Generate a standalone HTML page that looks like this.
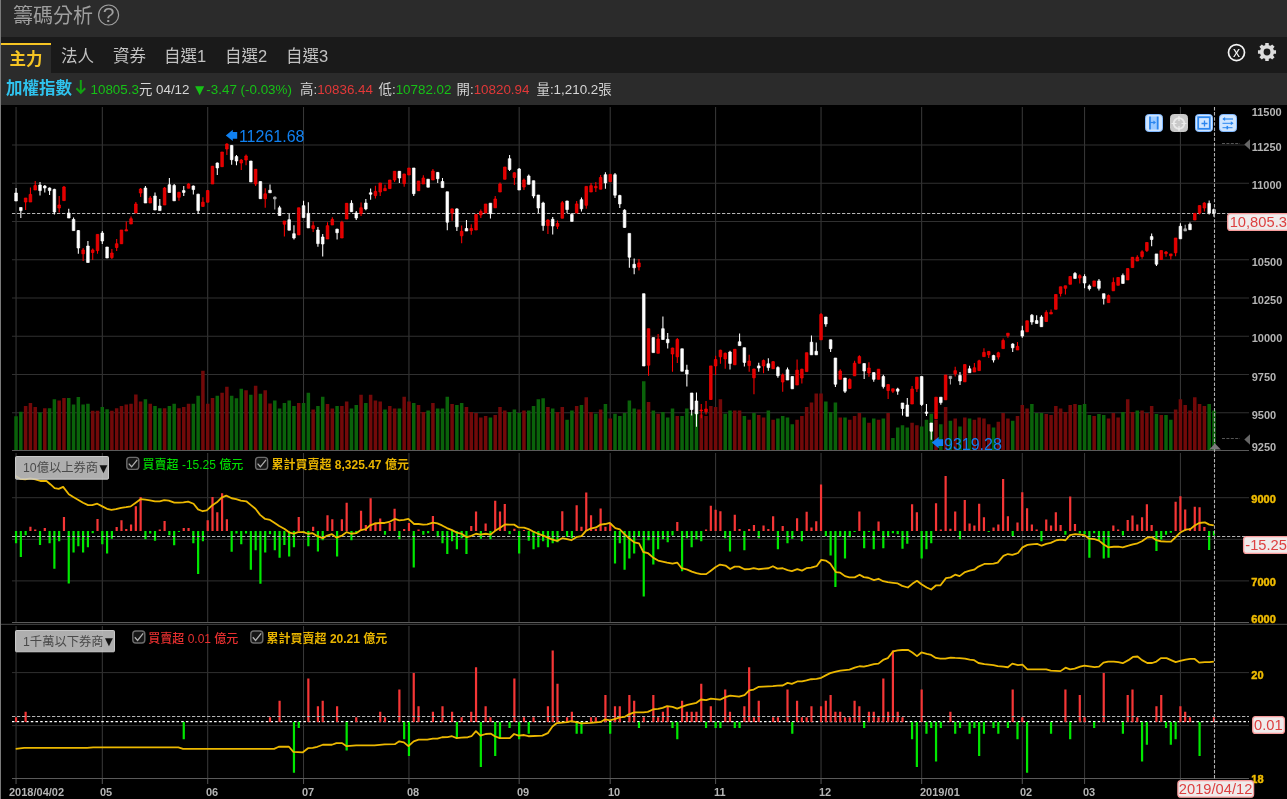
<!DOCTYPE html>
<html lang="zh-Hant">
<head>
<meta charset="utf-8">
<title>籌碼分析</title>
<style>
html,body{margin:0;padding:0;background:#000;}
body{width:1287px;height:799px;overflow:hidden;position:relative;font-family:"Liberation Sans","Noto Sans CJK TC",sans-serif;}
.title{position:absolute;left:0;top:0;width:1287px;height:37px;background:#2b2b2b;}
.title .t{position:absolute;left:13px;top:0;line-height:32px;font-size:20px;color:#9f9f9f;white-space:nowrap;}
.tabs{position:absolute;left:0;top:37px;width:1287px;height:36px;background:#1a1a1a;}
.tab{position:absolute;top:6px;height:30px;line-height:27px;font-size:16.5px;color:#c2c2c2;white-space:nowrap;}
.tab.on{left:1px;width:50px;background:#2b2b2b;border-top:2px solid #f6c523;height:28px;color:#f6c523;font-weight:bold;text-align:center;line-height:28px;}
.info{position:absolute;left:0;top:73px;width:1287px;height:32px;background:#2b2b2b;font-size:13.4px;color:#d6d6d6;white-space:nowrap;}
.info span{position:absolute;top:0;line-height:33px;}
.info span.nm{font-size:16.5px;font-weight:bold;color:#2fc3ee;line-height:30px;}
.info span.tri{position:static;font-size:15.5px;line-height:20px;vertical-align:-0.5px;margin-right:-1px;}
.g{color:#16c116;}
.r{color:#e23838;}
.lb{position:absolute;left:0;top:0;width:1px;height:799px;background:#7a7a7a;}
svg{position:absolute;left:0;top:0;}
svg text{font-family:"Liberation Sans","Noto Sans CJK TC",sans-serif;}
</style>
</head>
<body>
<svg width="1287" height="799" viewBox="0 0 1287 799" style="will-change:transform">
<rect x="0" y="105" width="1287" height="694" fill="#000"/>
<path d="M16.05 107V450M16.05 453V622M16.05 626V778M102.3 107V450M102.3 453V622M102.3 626V778M207.71 107V450M207.71 453V622M207.71 626V778M303.55 107V450M303.55 453V622M303.55 626V778M408.96 107V450M408.96 453V622M408.96 626V778M519.17 107V450M519.17 453V622M519.17 626V778M610.21 107V450M610.21 453V622M610.21 626V778M715.62 107V450M715.62 453V622M715.62 626V778M821.04 107V450M821.04 453V622M821.04 626V778M921.66 107V450M921.66 453V622M921.66 626V778M1022.29 107V450M1022.29 453V622M1022.29 626V778M1084.58 107V450M1084.58 453V622M1084.58 626V778M1180.41 107V450M1180.41 453V622M1180.41 626V778" stroke="#3a3a3a" stroke-width="1" fill="none"/>
<path d="M16.05 779V784M102.3 779V784M207.71 779V784M303.55 779V784M408.96 779V784M519.17 779V784M610.21 779V784M715.62 779V784M821.04 779V784M921.66 779V784M1022.29 779V784M1084.58 779V784M1180.41 779V784" stroke="#555" stroke-width="1" fill="none"/>
<path d="M12 145H1249M12 183.25H1249M12 221.5H1249M12 259.75H1249M12 298H1249M12 336.25H1249M12 374.5H1249M12 412.75H1249M12 497.7H1249M12 539.3H1249M12 580.9H1249M12 672.6H1249M12 725.6H1249" stroke="#303030" stroke-width="1" fill="none"/>
<path d="M12 450.5H1249" stroke="#5a5a5a" stroke-width="1" fill="none"/>
<path d="M12 622.5H1249" stroke="#5a5a5a" stroke-width="1" fill="none"/>
<path d="M1 624.4H1287" stroke="#3a3a3a" stroke-width="1.2" fill="none"/>
<path d="M12 778.5H1249" stroke="#5a5a5a" stroke-width="1" fill="none"/>
<path d="M23.88 450v-44.1h3.5V450zM28.67 450v-47.11h3.5V450zM33.47 450v-42.93h3.5V450zM43.05 450v-41.76h3.5V450zM57.42 450v-49.62h3.5V450zM62.22 450v-52.12h3.5V450zM90.97 450v-39.26h3.5V450zM95.76 450v-39.26h3.5V450zM110.13 450v-39.26h3.5V450zM114.92 450v-41.76h3.5V450zM119.72 450v-44.1h3.5V450zM124.51 450v-45.44h3.5V450zM129.3 450v-46.27h3.5V450zM134.09 450v-55.46h3.5V450zM138.88 450v-48.45h3.5V450zM148.46 450v-46.27h3.5V450zM162.84 450v-41.76h3.5V450zM177.21 450v-41.76h3.5V450zM182.01 450v-42.93h3.5V450zM186.8 450v-46.27h3.5V450zM201.17 450v-79.18h3.5V450zM205.96 450v-46.27h3.5V450zM210.76 450v-52.12h3.5V450zM220.34 450v-57.17h3.5V450zM225.13 450v-63.23h3.5V450zM244.3 450v-59.8h3.5V450zM253.88 450v-64.24h3.5V450zM263.46 450v-59.8h3.5V450zM268.25 450v-46.46h3.5V450zM297 450v-47.07h3.5V450zM311.38 450v-40.4h3.5V450zM325.75 450v-46.06h3.5V450zM330.55 450v-41.41h3.5V450zM340.13 450v-44.04h3.5V450zM344.92 450v-48.48h3.5V450zM359.3 450v-55.15h3.5V450zM368.88 450v-55.15h3.5V450zM373.67 450v-49.49h3.5V450zM378.46 450v-48.48h3.5V450zM388.04 450v-44.04h3.5V450zM392.84 450v-41.41h3.5V450zM402.42 450v-53.13h3.5V450zM407.21 450v-48.48h3.5V450zM416.79 450v-45.05h3.5V450zM421.59 450v-37.98h3.5V450zM431.17 450v-47.07h3.5V450zM450.34 450v-46.06h3.5V450zM464.71 450v-43.03h3.5V450zM469.5 450v-37.98h3.5V450zM474.29 450v-36.97h3.5V450zM479.09 450v-32.53h3.5V450zM483.88 450v-33.94h3.5V450zM493.46 450v-34.95h3.5V450zM498.25 450v-43.03h3.5V450zM503.04 450v-39.39h3.5V450zM522.21 450v-39.39h3.5V450zM546.17 450v-43.03h3.5V450zM555.75 450v-37.98h3.5V450zM560.54 450v-43.03h3.5V450zM574.92 450v-44.04h3.5V450zM584.5 450v-52.73h3.5V450zM589.29 450v-37.98h3.5V450zM598.88 450v-40.4h3.5V450zM608.46 450v-31.52h3.5V450zM637.21 450v-40.4h3.5V450zM646.79 450v-48.08h3.5V450zM656.37 450v-36.36h3.5V450zM675.54 450v-33.94h3.5V450zM699.5 450v-35.56h3.5V450zM704.29 450v-33.94h3.5V450zM709.08 450v-44.04h3.5V450zM713.87 450v-43.03h3.5V450zM718.67 450v-50.71h3.5V450zM733.04 450v-39.39h3.5V450zM737.83 450v-39.39h3.5V450zM747.41 450v-30.3h3.5V450zM757 450v-34.95h3.5V450zM761.79 450v-32.53h3.5V450zM771.37 450v-30.3h3.5V450zM795.33 450v-30.3h3.5V450zM800.12 450v-33.94h3.5V450zM804.91 450v-43.03h3.5V450zM809.71 450v-47.47h3.5V450zM814.5 450v-56.57h3.5V450zM819.29 450v-56.57h3.5V450zM838.46 450v-32.53h3.5V450zM848.04 450v-30.3h3.5V450zM852.83 450v-33.94h3.5V450zM857.62 450v-36.97h3.5V450zM867.2 450v-27.27h3.5V450zM876.79 450v-30.3h3.5V450zM886.37 450v-36.97h3.5V450zM910.33 450v-27.27h3.5V450zM915.12 450v-24.85h3.5V450zM934.29 450v-30.3h3.5V450zM943.87 450v-43.03h3.5V450zM953.45 450v-31.52h3.5V450zM963.04 450v-32.53h3.5V450zM972.62 450v-30.3h3.5V450zM977.41 450v-32.53h3.5V450zM982.2 450v-31.52h3.5V450zM986.99 450v-25.86h3.5V450zM996.58 450v-28.28h3.5V450zM1001.37 450v-36.97h3.5V450zM1006.16 450v-31.52h3.5V450zM1015.74 450v-33.94h3.5V450zM1020.54 450v-45.05h3.5V450zM1025.33 450v-41.41h3.5V450zM1044.49 450v-35.96h3.5V450zM1049.29 450v-34.95h3.5V450zM1054.08 450v-44.04h3.5V450zM1058.87 450v-41.41h3.5V450zM1063.66 450v-37.98h3.5V450zM1068.45 450v-45.05h3.5V450zM1073.24 450v-46.06h3.5V450zM1092.41 450v-33.94h3.5V450zM1106.78 450v-31.52h3.5V450zM1111.58 450v-36.97h3.5V450zM1116.37 450v-32.53h3.5V450zM1125.95 450v-50.71h3.5V450zM1130.74 450v-37.98h3.5V450zM1140.33 450v-39.39h3.5V450zM1145.12 450v-36.97h3.5V450zM1149.91 450v-44.04h3.5V450zM1159.49 450v-34.95h3.5V450zM1173.87 450v-40.4h3.5V450zM1178.66 450v-50.71h3.5V450zM1183.45 450v-45.05h3.5V450zM1188.24 450v-39.39h3.5V450zM1193.03 450v-52.73h3.5V450zM1197.83 450v-46.06h3.5V450zM1202.62 450v-44.04h3.5V450z" fill="#720909"/>
<path d="M14.3 450v-33.75h3.5V450zM19.09 450v-38.26h3.5V450zM38.26 450v-37.42h3.5V450zM47.84 450v-41.76h3.5V450zM52.63 450v-50.79h3.5V450zM67.01 450v-52.12h3.5V450zM71.8 450v-45.44h3.5V450zM76.59 450v-52.96h3.5V450zM81.38 450v-45.44h3.5V450zM86.17 450v-46.27h3.5V450zM100.55 450v-42.93h3.5V450zM105.34 450v-40.76h3.5V450zM143.67 450v-50.79h3.5V450zM153.26 450v-44.1h3.5V450zM158.05 450v-41.76h3.5V450zM167.63 450v-44.1h3.5V450zM172.42 450v-46.27h3.5V450zM191.59 450v-46.27h3.5V450zM196.38 450v-54.29h3.5V450zM215.55 450v-54.14h3.5V450zM229.92 450v-54.14h3.5V450zM234.71 450v-51.72h3.5V450zM239.51 450v-61.21h3.5V450zM249.09 450v-55.15h3.5V450zM258.67 450v-56.16h3.5V450zM273.05 450v-49.49h3.5V450zM277.84 450v-41.41h3.5V450zM282.63 450v-47.07h3.5V450zM287.42 450v-49.49h3.5V450zM292.21 450v-44.04h3.5V450zM301.8 450v-47.07h3.5V450zM306.59 450v-57.17h3.5V450zM316.17 450v-44.04h3.5V450zM320.96 450v-53.13h3.5V450zM335.34 450v-44.04h3.5V450zM349.71 450v-41.41h3.5V450zM354.5 450v-45.05h3.5V450zM364.09 450v-47.07h3.5V450zM383.25 450v-40.4h3.5V450zM397.63 450v-41.41h3.5V450zM412 450v-47.07h3.5V450zM426.38 450v-39.39h3.5V450zM435.96 450v-41.41h3.5V450zM440.75 450v-41.41h3.5V450zM445.54 450v-53.13h3.5V450zM455.13 450v-45.05h3.5V450zM459.92 450v-47.07h3.5V450zM488.67 450v-32.53h3.5V450zM507.83 450v-37.98h3.5V450zM512.63 450v-40.4h3.5V450zM517.42 450v-36.97h3.5V450zM527 450v-39.39h3.5V450zM531.79 450v-44.04h3.5V450zM536.58 450v-50.71h3.5V450zM541.38 450v-51.72h3.5V450zM550.96 450v-41.41h3.5V450zM565.33 450v-30.3h3.5V450zM570.13 450v-39.39h3.5V450zM579.71 450v-45.05h3.5V450zM594.08 450v-36.36h3.5V450zM603.67 450v-46.06h3.5V450zM613.25 450v-36.36h3.5V450zM618.04 450v-33.94h3.5V450zM622.83 450v-36.97h3.5V450zM627.62 450v-49.49h3.5V450zM632.42 450v-41.41h3.5V450zM642 450v-68.69h3.5V450zM651.58 450v-39.39h3.5V450zM661.17 450v-37.98h3.5V450zM665.96 450v-32.53h3.5V450zM670.75 450v-41.41h3.5V450zM680.33 450v-33.94h3.5V450zM685.12 450v-41.41h3.5V450zM689.92 450v-36.57h3.5V450zM694.71 450v-38.38h3.5V450zM723.46 450v-36.36h3.5V450zM728.25 450v-39.39h3.5V450zM742.62 450v-33.94h3.5V450zM752.21 450v-36.97h3.5V450zM766.58 450v-39.39h3.5V450zM776.16 450v-31.52h3.5V450zM780.96 450v-33.94h3.5V450zM785.75 450v-32.53h3.5V450zM790.54 450v-25.86h3.5V450zM824.08 450v-48.48h3.5V450zM828.87 450v-37.98h3.5V450zM833.66 450v-47.47h3.5V450zM843.25 450v-32.53h3.5V450zM862.41 450v-32.53h3.5V450zM872 450v-31.52h3.5V450zM881.58 450v-31.52h3.5V450zM891.16 450v-12.12h3.5V450zM895.95 450v-22.42h3.5V450zM900.75 450v-24.85h3.5V450zM905.54 450v-22.42h3.5V450zM919.91 450v-23.43h3.5V450zM924.7 450v-30.3h3.5V450zM929.5 450v-36.36h3.5V450zM939.08 450v-25.86h3.5V450zM948.66 450v-29.29h3.5V450zM958.25 450v-23.43h3.5V450zM967.83 450v-31.52h3.5V450zM991.79 450v-22.42h3.5V450zM1010.95 450v-29.29h3.5V450zM1030.12 450v-46.06h3.5V450zM1034.91 450v-36.97h3.5V450zM1039.7 450v-36.97h3.5V450zM1078.04 450v-45.05h3.5V450zM1082.83 450v-46.06h3.5V450zM1087.62 450v-34.95h3.5V450zM1097.2 450v-35.96h3.5V450zM1101.99 450v-34.95h3.5V450zM1121.16 450v-37.98h3.5V450zM1135.53 450v-39.39h3.5V450zM1154.7 450v-35.96h3.5V450zM1164.28 450v-34.95h3.5V450zM1169.08 450v-30.3h3.5V450zM1207.41 450v-46.06h3.5V450zM1212.2 450v-39.39h3.5V450z" fill="#0a620a"/>
<path d="M12 213.5H1249" stroke="#b4b4b4" stroke-width="1" stroke-dasharray="3.3 1.7" fill="none"/>
<path d="M16.05 188V201M20.84 207.5V218M40.01 182V195.6M44.8 185V192.5M49.59 187.5V195M54.38 188.75V214.4M68.76 208.75V218M73.55 217.5V230.6M78.34 230V253.75M87.92 241V262.5M102.3 231V244M107.09 247V258M145.42 186V203M155.01 192.5V210M159.8 199V210.6M169.38 178V192.5M174.17 184V200.8M183.76 186V196M193.34 185.4V194.5M198.13 193.8V214M217.3 162.5V175M231.67 145V164.8M236.46 155V165.3M250.84 161V181.9M260.42 181.6V198.7M270 184.4V192.8M279.59 205.7V215.5M289.17 213.8V230.2M293.96 225.3V239.4M303.55 200.8V217.6M308.34 202.2V227.9M317.92 227V246.7M322.71 234V256.5M337.09 228.8V239.4M351.46 200.2V211.7M356.25 211V220M365.84 199V210.3M370.63 188.6V199.8M399.38 171V183M413.75 168V196M428.13 179.2V187.2M437.71 172V183M442.5 178V187.6M447.29 191.8V230.2M456.88 208.2V231M466.46 220V231M490.42 203.2V218.6M509.58 155V171M519.17 168V190M528.75 174.4V184.3M533.54 180.7V198.3M538.33 195V213M543.13 201.8V230.8M552.71 217V234.4M567.08 200.8V213M571.88 213V221.4M581.46 197.6V211.6M605.42 172.3V188.7M615 173V198M619.79 194.8V208M624.58 209.2V227.8M629.37 233.4V267.8M634.17 258.4V274.3M643.75 293.7V366M653.33 337.6V352.6M662.92 316.5V339.5M667.71 333V348.4M682.08 348.8V371.2M686.87 364.8V386.6M691.67 393V415.6M696.46 392.5V426.8M730 350.7V369.4M739.58 333.4V345.6M744.37 347.7V366.6M758.75 362.8V371.8M768.33 358.2V370.8M777.91 366.2V377.8M787.5 367.4V380M792.29 376.5V388.8M811.46 335.6V354.8M816.25 342.6V354.8M825.83 317V326.7M830.62 339.8V352M835.41 358V387M845 378V393M864.16 363.6V379M873.75 372.6V381.8M883.33 374.8V388.4M897.7 387.7V394.7M902.5 403V415.6M907.29 398V416.3M921.66 376.5V405.9M926.45 404V416M931.25 423V439.8M940.83 397.2V404.8M960 372V385M969.58 365.7V372.7M993.54 354.8V362.6M1012.7 343.3V352M1022.29 325.7V337.7M1031.87 314V324.8M1036.66 315.2V323.4M1041.45 315.2V326.7M1074.99 272V278.4M1084.58 274.2V288.3M1089.37 284.6V290.5M1098.95 279V290.5M1103.74 293.7V304.5M1122.91 273.5V283.4M1151.66 233.6V246.2M1156.45 253.9V266M1180.41 223.3V238.8M1189.99 222.6V229.7M1209.16 200.4V214.5M1213.95 208.5V216.7" stroke="#ffffff" stroke-width="1.05" fill="none"/>
<path d="M14.75 193h2.6v8h-2.6zM19.54 207.5h2.6v3.1h-2.6zM38.71 185h2.6v5.6h-2.6zM43.5 186h2.6v2h-2.6zM48.29 188h2.6v2.6h-2.6zM53.08 189.4h2.6v22.6h-2.6zM67.46 213h2.6v5h-2.6zM72.25 219.4h2.6v11.2h-2.6zM77.04 230.6h2.6v17.4h-2.6zM86.62 246h2.6v16.5h-2.6zM101 233h2.6v8h-2.6zM105.79 247h2.6v11h-2.6zM144.12 188h2.6v15h-2.6zM153.71 196h2.6v14h-2.6zM158.5 206h2.6v4.6h-2.6zM168.08 184.75h2.6v7.75h-2.6zM172.87 185.4h2.6v15.4h-2.6zM182.46 190.6h2.6v1.8h-2.6zM192.04 186h2.6v3.6h-2.6zM196.83 194.2h2.6v16.4h-2.6zM216 163h2.6v4.9h-2.6zM230.37 145.4h2.6v14.3h-2.6zM235.16 156.6h2.6v4.4h-2.6zM249.54 161h2.6v20.9h-2.6zM259.12 181.6h2.6v17.1h-2.6zM268.7 190.3h2.6v2.5h-2.6zM278.29 207.8h2.6v7.7h-2.6zM287.87 219.7h2.6v10.5h-2.6zM292.66 233.7h2.6v4.3h-2.6zM302.25 205.7h2.6v11.9h-2.6zM307.04 213.4h2.6v14.5h-2.6zM316.62 230h2.6v13.6h-2.6zM321.41 237h2.6v7h-2.6zM335.79 229.2h2.6v3.5h-2.6zM350.16 203.3h2.6v8.4h-2.6zM354.95 213h2.6v5h-2.6zM364.54 203h2.6v5.9h-2.6zM369.33 192.8h2.6v1.4h-2.6zM398.08 171.3h2.6v6.7h-2.6zM412.45 168h2.6v25.7h-2.6zM426.83 179.2h2.6v8h-2.6zM436.41 172.4h2.6v6.3h-2.6zM441.2 181.5h2.6v6.1h-2.6zM445.99 191.8h2.6v30.4h-2.6zM455.58 208.9h2.6v17.9h-2.6zM465.16 228.5h2.6v2.5h-2.6zM489.12 203.2h2.6v10.5h-2.6zM508.28 158.7h2.6v10.8h-2.6zM517.87 169h2.6v21h-2.6zM527.45 176h2.6v8.3h-2.6zM532.24 180.7h2.6v15.3h-2.6zM537.03 195h2.6v13h-2.6zM541.83 203h2.6v22.6h-2.6zM551.41 219.3h2.6v6.7h-2.6zM565.78 201h2.6v8.5h-2.6zM570.58 214.4h2.6v7h-2.6zM580.16 199.7h2.6v9.1h-2.6zM604.12 174.7h2.6v8.2h-2.6zM613.7 174.7h2.6v20.5h-2.6zM618.49 195.5h2.6v8.4h-2.6zM623.28 210.2h2.6v17.2h-2.6zM628.07 233.4h2.6v23.8h-2.6zM632.87 264.3h2.6v3.5h-2.6zM642.45 293.7h2.6v72.3h-2.6zM652.03 337.6h2.6v15h-2.6zM661.62 328.7h2.6v10.8h-2.6zM666.41 339.3h2.6v3.5h-2.6zM680.78 348.8h2.6v22.4h-2.6zM685.57 370h2.6v4h-2.6zM690.37 393h2.6v16.5h-2.6zM695.16 401h2.6v12.8h-2.6zM728.7 352h2.6v11.4h-2.6zM738.28 341.8h2.6v3.8h-2.6zM743.07 347.7h2.6v14.7h-2.6zM757.45 365.9h2.6v2.1h-2.6zM767.03 363.8h2.6v3.8h-2.6zM776.61 367.6h2.6v8.1h-2.6zM786.2 369.8h2.6v10.2h-2.6zM790.99 376.5h2.6v12.3h-2.6zM810.16 342.2h2.6v12.6h-2.6zM814.95 351.3h2.6v3.5h-2.6zM824.53 317h2.6v7h-2.6zM829.32 339.8h2.6v8.9h-2.6zM834.11 358h2.6v26.2h-2.6zM843.7 378h2.6v13.2h-2.6zM862.86 363.6h2.6v7.4h-2.6zM872.45 372.6h2.6v6.7h-2.6zM882.03 376.5h2.6v10.1h-2.6zM896.4 389h2.6v2.2h-2.6zM901.2 403h2.6v5.5h-2.6zM905.99 405h2.6v11.3h-2.6zM920.36 376.5h2.6v28h-2.6zM925.15 412h2.6v1.3h-2.6zM929.95 423h2.6v8.2h-2.6zM939.53 397.2h2.6v5.4h-2.6zM958.7 375.5h2.6v5.5h-2.6zM968.28 368.8h2.6v3.9h-2.6zM992.24 355.6h2.6v4.4h-2.6zM1011.4 344h2.6v3.8h-2.6zM1020.99 330.7h2.6v5.3h-2.6zM1030.57 315.2h2.6v6.8h-2.6zM1035.36 320.6h2.6v2.8h-2.6zM1040.15 317h2.6v9.7h-2.6zM1073.69 273.5h2.6v4.9h-2.6zM1083.28 276.5h2.6v6.5h-2.6zM1088.07 286h2.6v2.7h-2.6zM1097.65 280.9h2.6v7.4h-2.6zM1102.44 293.7h2.6v4.9h-2.6zM1121.61 275.4h2.6v8h-2.6zM1150.36 236.6h2.6v2.9h-2.6zM1155.15 253.9h2.6v10.3h-2.6zM1179.11 226.3h2.6v12.5h-2.6zM1188.69 224.3h2.6v5.4h-2.6zM1207.86 203.4h2.6v9.6h-2.6zM1212.65 209.6h2.6v3.4h-2.6z" fill="#ffffff" stroke="#ffffff" stroke-width="0.7"/>
<path d="M274.8 196.6V209.6M950.41 376.2V384.4M1185.2 224.8V231" stroke="#aaaaaa" stroke-width="1.05" fill="none"/>
<path d="M273.5 197h2.6v2h-2.6zM949.11 376.2h2.6v2.3h-2.6zM1183.9 228.8h2.6v2.2h-2.6z" fill="#aaaaaa" stroke="#aaaaaa" stroke-width="0.7"/>
<path d="M25.63 198V210M30.42 187.5V202M35.22 181V190M59.17 196V212.5M63.97 186V200.6M83.13 248V261M92.72 248.5V260M97.51 234.4V253.75M111.88 249V259M116.67 239V251M121.47 230V243.75M126.26 221.5V231M131.05 216.5V224M135.84 202V213M140.63 188V197M150.21 196V203M164.59 187V205M178.96 191.7V200.8M188.55 183.3V188.2M202.92 197.3V206.4M207.71 190V202.2M212.51 166.2V184M222.09 152V166.7M226.88 143.3V155M241.26 159V170M246.05 154.5V165.3M255.63 169.3V186M265.21 188.2V207.8M284.38 221V236.5M298.75 207.8V234.9M313.13 221.5V232M327.5 222.2V239M332.3 217.3V225M341.88 220.8V238M346.67 203.3V219M361.05 202.6V215.9M375.42 185.7V198.4M380.21 183V196M385 184.8V190.7M389.79 180V188.6M394.59 171.3V182M404.17 173.8V186.7M408.96 168V175M418.54 181V190.7M423.34 175.2V184M432.92 169V180M452.09 208.6V220.8M461.67 225.4V243.2M471.25 224.3V234.8M476.04 214.5V230M480.84 209.5V218M485.63 204V213M495.21 196V207.8M500 182.6V192M504.79 167V179.3M514.38 172.3V185M523.96 178.6V190M547.92 219.3V234M557.5 220.4V229M562.29 201V218.2M576.67 201V213M586.25 186.4V208.8M591.04 182.9V192M595.83 182V192M600.63 175V189.2M610.21 174.4V181.7M638.96 259V270.6M648.54 328.7V375.7M658.12 334V353.3M672.5 347.7V371.8M677.29 338V363M701.25 404V418.2M706.04 401V414.6M710.83 365.9V399.5M715.62 355.8V375M720.42 349.8V363.8M725.21 352.6V368.7M734.79 349.3V364.8M749.16 354.7V371.8M753.96 368.7V394.2M763.54 359.6V373.2M773.12 361V368.7M782.71 373.6V391.8M797.08 359.4V385M801.87 368.8V383.5M806.66 352.7V371.6M821.04 313V339.8M840.21 369.2V379.3M849.79 378.2V388.4M854.58 360.8V375.8M859.37 355.2V363.2M868.95 362.2V376.8M878.54 369.2V379.3M888.12 384.2V399M892.91 388.8V393M912.08 386V404M916.87 377.2V392M936.04 397.2V418.7M945.62 375V399.8M955.2 366.8V376.6M964.79 364.6V381.8M974.37 362.9V372M979.16 359.8V370.6M983.95 348.2V356.6M988.74 351V358M998.33 351.7V359.4M1003.12 338.4V348.6M1007.91 333.2V337.7M1017.49 341.9V350M1027.08 320.8V331.8M1046.24 310.3V321.5M1051.04 309.6V314M1055.83 294.5V309.3M1060.62 286.8V296.4M1065.41 285.8V294.6M1070.2 276.5V284.3M1079.79 274.2V283.4M1094.16 280.9V286.3M1108.53 294.6V302.6M1113.33 277.5V290.8M1118.12 277.5V285.3M1127.7 268.6V279.9M1132.49 257.3V267.6M1137.28 255.3V261M1142.08 250.3V258.7M1146.87 242.5V252M1161.24 250.6V259.5M1166.03 251V256.8M1170.83 253.9V259.5M1175.62 238V256.2M1194.78 213.4V220M1199.58 205.6V214.5M1204.37 202.2V211.5" stroke="#ff0000" stroke-width="1.05" fill="none"/>
<path d="M24.33 198h2.6v4h-2.6zM29.12 194.4h2.6v7.6h-2.6zM33.92 185.6h2.6v4.4h-2.6zM57.87 205h2.6v3h-2.6zM62.67 187h2.6v13.6h-2.6zM81.83 250h2.6v3.75h-2.6zM91.42 250h2.6v2.5h-2.6zM96.21 234.4h2.6v16.2h-2.6zM110.58 253h2.6v4.5h-2.6zM115.37 243.75h2.6v3.75h-2.6zM120.17 230h2.6v13.75h-2.6zM124.96 229.75h2.6v1.25h-2.6zM129.75 218.75h2.6v5.25h-2.6zM134.54 204h2.6v9h-2.6zM139.33 189h2.6v4h-2.6zM148.91 198h2.6v5h-2.6zM163.29 188h2.6v17h-2.6zM177.66 192.4h2.6v4.9h-2.6zM187.25 184h2.6v4.2h-2.6zM201.62 202.2h2.6v4.2h-2.6zM206.41 190.6h2.6v11.6h-2.6zM211.21 166.2h2.6v17.8h-2.6zM220.79 152h2.6v14.7h-2.6zM225.58 144h2.6v5h-2.6zM239.96 160h2.6v3h-2.6zM244.75 156h2.6v4h-2.6zM254.33 169.3h2.6v14.7h-2.6zM263.91 193.8h2.6v4.9h-2.6zM283.08 221h2.6v3.2h-2.6zM297.45 207.8h2.6v27.1h-2.6zM311.83 225.7h2.6v2.8h-2.6zM326.2 225.7h2.6v13.3h-2.6zM331 219.4h2.6v5.6h-2.6zM340.58 222.2h2.6v15.8h-2.6zM345.37 203.3h2.6v15.7h-2.6zM359.75 207.8h2.6v5.6h-2.6zM374.12 191.4h2.6v4.2h-2.6zM378.91 183h2.6v9h-2.6zM383.7 188.6h2.6v2.1h-2.6zM388.49 180h2.6v8.6h-2.6zM393.29 171.3h2.6v8.7h-2.6zM402.87 174h2.6v9.6h-2.6zM407.66 168h2.6v7h-2.6zM417.24 181h2.6v9.7h-2.6zM422.04 178h2.6v6h-2.6zM431.62 171h2.6v9h-2.6zM450.79 208.9h2.6v4.1h-2.6zM460.37 231.3h2.6v4.5h-2.6zM469.95 228.5h2.6v2.1h-2.6zM474.74 214.5h2.6v15.5h-2.6zM479.54 211.6h2.6v3.4h-2.6zM484.33 204h2.6v9h-2.6zM493.91 199h2.6v8.8h-2.6zM498.7 184h2.6v8h-2.6zM503.49 167h2.6v12.3h-2.6zM513.08 172.8h2.6v4.7h-2.6zM522.66 180h2.6v7h-2.6zM546.62 220h2.6v5.6h-2.6zM556.2 223.5h2.6v2.8h-2.6zM560.99 202.8h2.6v15.4h-2.6zM575.37 203.9h2.6v9.1h-2.6zM584.95 186.4h2.6v18.9h-2.6zM589.74 185.7h2.6v6.3h-2.6zM594.53 186.4h2.6v1.4h-2.6zM599.33 177.5h2.6v11.7h-2.6zM608.91 174.4h2.6v7.3h-2.6zM637.66 262.9h2.6v4.1h-2.6zM647.24 328.7h2.6v36.5h-2.6zM656.82 339h2.6v14.3h-2.6zM671.2 348h2.6v6h-2.6zM675.99 339.5h2.6v17.3h-2.6zM699.95 410h2.6v1h-2.6zM704.74 409h2.6v2.8h-2.6zM709.53 365.9h2.6v33.6h-2.6zM714.32 359.6h2.6v6.3h-2.6zM719.12 350.2h2.6v6.6h-2.6zM723.91 353.3h2.6v5.6h-2.6zM733.49 349.3h2.6v15.5h-2.6zM747.86 361h2.6v4.6h-2.6zM752.66 369h2.6v8.8h-2.6zM762.24 360.6h2.6v5.3h-2.6zM771.82 361.7h2.6v7h-2.6zM781.41 375h2.6v7h-2.6zM795.78 370.2h2.6v14.8h-2.6zM800.57 369.2h2.6v8.8h-2.6zM805.36 352.7h2.6v18.9h-2.6zM819.74 314.5h2.6v25.3h-2.6zM838.91 371h2.6v8.3h-2.6zM848.49 379.6h2.6v8.8h-2.6zM853.28 363.2h2.6v12.6h-2.6zM858.07 356.6h2.6v6.6h-2.6zM867.65 368h2.6v5h-2.6zM877.24 369.2h2.6v10.1h-2.6zM886.82 384.6h2.6v5.9h-2.6zM891.61 388.8h2.6v2.4h-2.6zM910.78 389h2.6v15h-2.6zM915.57 377.2h2.6v11.6h-2.6zM934.74 397.2h2.6v21.5h-2.6zM944.32 375h2.6v24.8h-2.6zM953.9 370.7h2.6v3.1h-2.6zM963.49 364.6h2.6v17.2h-2.6zM973.07 367.8h2.6v4.2h-2.6zM977.86 360.8h2.6v9.8h-2.6zM982.65 352.4h2.6v4.2h-2.6zM987.44 351.4h2.6v3.4h-2.6zM997.03 352.8h2.6v4.2h-2.6zM1001.82 340.5h2.6v8.1h-2.6zM1006.61 333.2h2.6v2.4h-2.6zM1016.19 346.4h2.6v3.6h-2.6zM1025.78 320.8h2.6v11h-2.6zM1044.94 312.4h2.6v9.1h-2.6zM1049.74 312.4h2.6v1.6h-2.6zM1054.53 294.5h2.6v14.8h-2.6zM1059.32 286.8h2.6v6.6h-2.6zM1064.11 285.8h2.6v2.5h-2.6zM1068.9 276.5h2.6v7.8h-2.6zM1078.49 275.7h2.6v2.3h-2.6zM1092.86 280.9h2.6v5.4h-2.6zM1107.23 295.6h2.6v7h-2.6zM1112.03 282.4h2.6v8.4h-2.6zM1116.82 277.5h2.6v7.8h-2.6zM1126.4 268.6h2.6v11.3h-2.6zM1131.19 257.3h2.6v10.3h-2.6zM1135.98 257.3h2.6v3.7h-2.6zM1140.78 251.8h2.6v4.7h-2.6zM1145.57 242.5h2.6v8.1h-2.6zM1159.94 250.6h2.6v8.9h-2.6zM1164.73 252h2.6v1.6h-2.6zM1169.53 253.9h2.6v1.9h-2.6zM1174.32 238h2.6v14.8h-2.6zM1193.48 213.4h2.6v6.6h-2.6zM1198.28 205.6h2.6v7.4h-2.6zM1203.07 203h2.6v5h-2.6z" fill="#e00000" stroke="#ff0000" stroke-width="0.7"/>
<path d="M225.8 135.4l7 -5.6v2.3h4.4v6.6h-4.4v2.3z" fill="#1080f0"/>
<text x="238.9" y="142" font-size="16" fill="#1080f0">11261.68</text>
<path d="M931.7 442.6l7 -5.6v2.3h4.4v6.6h-4.4v2.3z" fill="#1080f0"/>
<text x="944" y="449.5" font-size="16" fill="#1080f0">9319.28</text>
<path d="M29.32 531.1v-4.46h2.2V531.1zM34.12 531.1v-1.62h2.2V531.1zM43.7 531.1v-3.04h2.2V531.1zM62.87 531.1v-14.2h2.2V531.1zM96.41 531.1v-12.17h2.2V531.1zM115.57 531.1v-4.06h2.2V531.1zM120.37 531.1v-10.75h2.2V531.1zM125.16 531.1v-2.03h2.2V531.1zM129.95 531.1v-6.69h2.2V531.1zM134.74 531.1v-24.75h2.2V531.1zM139.53 531.1v-34.08h2.2V531.1zM158.7 531.1v-1.62h2.2V531.1zM163.49 531.1v-10.14h2.2V531.1zM182.66 531.1v-3.04h2.2V531.1zM187.45 531.1v-3.04h2.2V531.1zM206.61 531.1v-10.75h2.2V531.1zM211.41 531.1v-34.08h2.2V531.1zM216.2 531.1v-18.86h2.2V531.1zM220.99 531.1v-37.93h2.2V531.1zM225.78 531.1v-11.76h2.2V531.1zM297.65 531.1v-14.2h2.2V531.1zM312.03 531.1v-4.46h2.2V531.1zM326.4 531.1v-15.82h2.2V531.1zM331.2 531.1v-11.76h2.2V531.1zM340.78 531.1v-11.76h2.2V531.1zM345.57 531.1v-28.4h2.2V531.1zM359.95 531.1v-20.28h2.2V531.1zM364.74 531.1v-6.09h2.2V531.1zM369.53 531.1v-32.86h2.2V531.1zM374.32 531.1v-8.52h2.2V531.1zM379.11 531.1v-12.58h2.2V531.1zM388.69 531.1v-8.11h2.2V531.1zM393.49 531.1v-22.31h2.2V531.1zM403.07 531.1v-2.03h2.2V531.1zM407.86 531.1v-8.11h2.2V531.1zM417.44 531.1v-1.62h2.2V531.1zM431.82 531.1v-15.21h2.2V531.1zM470.15 531.1v-5.07h2.2V531.1zM474.94 531.1v-19.68h2.2V531.1zM484.53 531.1v-7.71h2.2V531.1zM494.11 531.1v-30.43h2.2V531.1zM498.9 531.1v-19.68h2.2V531.1zM503.69 531.1v-26.98h2.2V531.1zM513.28 531.1v-2.43h2.2V531.1zM522.86 531.1v-1.01h2.2V531.1zM561.19 531.1v-19.88h2.2V531.1zM575.57 531.1v-25.96h2.2V531.1zM580.36 531.1v-4.46h2.2V531.1zM585.15 531.1v-38.54h2.2V531.1zM589.94 531.1v-15.82h2.2V531.1zM594.73 531.1v-2.43h2.2V531.1zM599.53 531.1v-22.72h2.2V531.1zM604.32 531.1v-4.46h2.2V531.1zM609.11 531.1v-8.11h2.2V531.1zM676.19 531.1v-9.13h2.2V531.1zM704.94 531.1v-1.62h2.2V531.1zM709.73 531.1v-25.35h2.2V531.1zM714.52 531.1v-21.3h2.2V531.1zM719.32 531.1v-19.88h2.2V531.1zM733.69 531.1v-16.23h2.2V531.1zM738.48 531.1v-2.03h2.2V531.1zM748.06 531.1v-2.03h2.2V531.1zM752.86 531.1v-6.09h2.2V531.1zM762.44 531.1v-5.68h2.2V531.1zM767.23 531.1v-2.03h2.2V531.1zM772.02 531.1v-14.81h2.2V531.1zM781.61 531.1v-5.07h2.2V531.1zM795.98 531.1v-12.78h2.2V531.1zM805.56 531.1v-19.27h2.2V531.1zM810.36 531.1v-3.65h2.2V531.1zM815.15 531.1v-9.74h2.2V531.1zM819.94 531.1v-46.65h2.2V531.1zM858.27 531.1v-19.68h2.2V531.1zM877.44 531.1v-9.53h2.2V531.1zM910.98 531.1v-26.77h2.2V531.1zM915.77 531.1v-18.86h2.2V531.1zM934.94 531.1v-27.79h2.2V531.1zM939.73 531.1v-1.62h2.2V531.1zM944.52 531.1v-55.17h2.2V531.1zM949.31 531.1v-2.43h2.2V531.1zM954.1 531.1v-19.68h2.2V531.1zM963.69 531.1v-31.03h2.2V531.1zM968.48 531.1v-7.71h2.2V531.1zM973.27 531.1v-5.68h2.2V531.1zM978.06 531.1v-27.38h2.2V531.1zM982.85 531.1v-13.79h2.2V531.1zM992.44 531.1v-3.65h2.2V531.1zM997.23 531.1v-6.69h2.2V531.1zM1002.02 531.1v-52.13h2.2V531.1zM1006.81 531.1v-14.81h2.2V531.1zM1016.39 531.1v-8.72h2.2V531.1zM1021.19 531.1v-38.95h2.2V531.1zM1025.98 531.1v-22.92h2.2V531.1zM1030.77 531.1v-6.69h2.2V531.1zM1035.56 531.1v-1.62h2.2V531.1zM1045.14 531.1v-11.56h2.2V531.1zM1049.94 531.1v-5.68h2.2V531.1zM1054.73 531.1v-18.86h2.2V531.1zM1059.52 531.1v-6.09h2.2V531.1zM1069.1 531.1v-34.48h2.2V531.1zM1073.89 531.1v-7.1h2.2V531.1zM1112.23 531.1v-5.68h2.2V531.1zM1117.02 531.1v-1.62h2.2V531.1zM1126.6 531.1v-11.16h2.2V531.1zM1131.39 531.1v-15.62h2.2V531.1zM1136.18 531.1v-6.69h2.2V531.1zM1140.98 531.1v-13.79h2.2V531.1zM1145.77 531.1v-26.77h2.2V531.1zM1150.56 531.1v-6.09h2.2V531.1zM1174.52 531.1v-29.41h2.2V531.1zM1179.31 531.1v-34.89h2.2V531.1zM1184.1 531.1v-21.7h2.2V531.1zM1188.89 531.1v-3.04h2.2V531.1zM1193.68 531.1v-24.34h2.2V531.1zM1198.48 531.1v-23.94h2.2V531.1zM1203.27 531.1v-4.06h2.2V531.1z" fill="#f53636"/>
<path d="M14.95 531.1v12.17h2.2V531.1zM19.74 531.1v25.96h2.2V531.1zM24.53 531.1v4.06h2.2V531.1zM38.91 531.1v13.79h2.2V531.1zM48.49 531.1v12.17h2.2V531.1zM53.28 531.1v37.53h2.2V531.1zM58.07 531.1v10.14h2.2V531.1zM67.66 531.1v52.33h2.2V531.1zM72.45 531.1v21.3h2.2V531.1zM77.24 531.1v15.21h2.2V531.1zM82.03 531.1v21.3h2.2V531.1zM86.82 531.1v16.23h2.2V531.1zM91.62 531.1v2.03h2.2V531.1zM101.2 531.1v13.18h2.2V531.1zM105.99 531.1v22.31h2.2V531.1zM110.78 531.1v7.71h2.2V531.1zM144.32 531.1v8.11h2.2V531.1zM149.11 531.1v2.43h2.2V531.1zM153.91 531.1v9.74h2.2V531.1zM168.28 531.1v4.06h2.2V531.1zM173.07 531.1v14.2h2.2V531.1zM177.86 531.1v1.01h2.2V531.1zM192.24 531.1v12.17h2.2V531.1zM197.03 531.1v43h2.2V531.1zM201.82 531.1v10.14h2.2V531.1zM230.57 531.1v20.69h2.2V531.1zM235.36 531.1v2.43h2.2V531.1zM240.16 531.1v13.18h2.2V531.1zM244.95 531.1v2.43h2.2V531.1zM249.74 531.1v38.54h2.2V531.1zM254.53 531.1v19.27h2.2V531.1zM259.32 531.1v52.74h2.2V531.1zM264.11 531.1v21.3h2.2V531.1zM268.9 531.1v3.04h2.2V531.1zM273.7 531.1v19.27h2.2V531.1zM278.49 531.1v26.77h2.2V531.1zM283.28 531.1v13.79h2.2V531.1zM288.07 531.1v25.35h2.2V531.1zM292.86 531.1v16.23h2.2V531.1zM302.45 531.1v1.01h2.2V531.1zM307.24 531.1v15.21h2.2V531.1zM316.82 531.1v20.28h2.2V531.1zM321.61 531.1v9.13h2.2V531.1zM335.99 531.1v25.35h2.2V531.1zM350.36 531.1v9.13h2.2V531.1zM355.15 531.1v2.03h2.2V531.1zM383.9 531.1v3.65h2.2V531.1zM398.28 531.1v8.11h2.2V531.1zM412.65 531.1v36.51h2.2V531.1zM422.24 531.1v3.65h2.2V531.1zM427.03 531.1v2.03h2.2V531.1zM436.61 531.1v6.09h2.2V531.1zM441.4 531.1v12.17h2.2V531.1zM446.19 531.1v22.92h2.2V531.1zM450.99 531.1v10.14h2.2V531.1zM455.78 531.1v18.26h2.2V531.1zM460.57 531.1v7.1h2.2V531.1zM465.36 531.1v22.92h2.2V531.1zM479.74 531.1v7.71h2.2V531.1zM489.32 531.1v8.11h2.2V531.1zM508.48 531.1v3.04h2.2V531.1zM518.07 531.1v22.31h2.2V531.1zM527.65 531.1v9.74h2.2V531.1zM532.44 531.1v18.26h2.2V531.1zM537.23 531.1v16.23h2.2V531.1zM542.03 531.1v10.14h2.2V531.1zM546.82 531.1v16.23h2.2V531.1zM551.61 531.1v12.17h2.2V531.1zM556.4 531.1v11.16h2.2V531.1zM565.98 531.1v5.68h2.2V531.1zM570.78 531.1v7.1h2.2V531.1zM613.9 531.1v32.45h2.2V531.1zM618.69 531.1v12.17h2.2V531.1zM623.48 531.1v38.54h2.2V531.1zM628.27 531.1v27.38h2.2V531.1zM633.07 531.1v22.31h2.2V531.1zM637.86 531.1v5.07h2.2V531.1zM642.65 531.1v65.31h2.2V531.1zM647.44 531.1v9.13h2.2V531.1zM652.23 531.1v33.47h2.2V531.1zM657.02 531.1v18.26h2.2V531.1zM661.82 531.1v8.11h2.2V531.1zM666.61 531.1v11.16h2.2V531.1zM671.4 531.1v4.46h2.2V531.1zM680.98 531.1v40.16h2.2V531.1zM685.77 531.1v7.1h2.2V531.1zM690.57 531.1v16.23h2.2V531.1zM695.36 531.1v8.11h2.2V531.1zM700.15 531.1v10.14h2.2V531.1zM724.11 531.1v7.1h2.2V531.1zM728.9 531.1v20.28h2.2V531.1zM743.27 531.1v19.27h2.2V531.1zM757.65 531.1v7.1h2.2V531.1zM776.81 531.1v18.26h2.2V531.1zM786.4 531.1v12.17h2.2V531.1zM791.19 531.1v7.71h2.2V531.1zM800.77 531.1v10.14h2.2V531.1zM824.73 531.1v5.07h2.2V531.1zM829.52 531.1v24.34h2.2V531.1zM834.31 531.1v55.78h2.2V531.1zM839.11 531.1v5.68h2.2V531.1zM843.9 531.1v27.38h2.2V531.1zM848.69 531.1v6.09h2.2V531.1zM853.48 531.1v1.01h2.2V531.1zM863.06 531.1v17.24h2.2V531.1zM867.85 531.1v1.01h2.2V531.1zM872.65 531.1v18.26h2.2V531.1zM882.23 531.1v17.24h2.2V531.1zM887.02 531.1v6.09h2.2V531.1zM891.81 531.1v2.03h2.2V531.1zM896.6 531.1v3.04h2.2V531.1zM901.4 531.1v17.65h2.2V531.1zM906.19 531.1v12.58h2.2V531.1zM920.56 531.1v27.38h2.2V531.1zM925.35 531.1v18.26h2.2V531.1zM930.15 531.1v12.17h2.2V531.1zM958.9 531.1v8.11h2.2V531.1zM987.64 531.1v1.01h2.2V531.1zM1011.6 531.1v5.07h2.2V531.1zM1040.35 531.1v10.14h2.2V531.1zM1064.31 531.1v3.65h2.2V531.1zM1078.69 531.1v2.43h2.2V531.1zM1083.48 531.1v3.04h2.2V531.1zM1088.27 531.1v26.77h2.2V531.1zM1093.06 531.1v2.03h2.2V531.1zM1097.85 531.1v9.13h2.2V531.1zM1102.64 531.1v27.38h2.2V531.1zM1107.43 531.1v26.77h2.2V531.1zM1121.81 531.1v4.46h2.2V531.1zM1155.35 531.1v19.88h2.2V531.1zM1160.14 531.1v8.52h2.2V531.1zM1164.93 531.1v3.65h2.2V531.1zM1169.73 531.1v1.62h2.2V531.1zM1208.06 531.1v18.86h2.2V531.1zM1212.85 531.1v4.46h2.2V531.1z" fill="#00e800"/>
<path d="M12 536.5H1249" stroke="#b4b4b4" stroke-width="1" stroke-dasharray="3.3 1.7" fill="none"/>
<path d="M12 721.6H1249" stroke="#ffffff" stroke-width="1.3" stroke-dasharray="2.5 2.2" fill="none"/>
<path d="M14.95 722v-4.67h2.2V722zM24.53 722v-10.14h2.2V722zM268.9 722v-4.67h2.2V722zM278.49 722v-21.3h2.2V722zM307.24 722v-43.61h2.2V722zM316.82 722v-15.82h2.2V722zM321.61 722v-21.3h2.2V722zM335.99 722v-15.82h2.2V722zM355.15 722v-4.67h2.2V722zM379.11 722v-10.14h2.2V722zM383.9 722v-4.67h2.2V722zM398.28 722v-32.45h2.2V722zM412.65 722v-49.09h2.2V722zM417.44 722v-15.82h2.2V722zM431.82 722v-10.14h2.2V722zM441.4 722v-15.82h2.2V722zM450.99 722v-10.14h2.2V722zM460.57 722v-4.67h2.2V722zM470.15 722v-10.14h2.2V722zM474.94 722v-54.77h2.2V722zM484.53 722v-15.82h2.2V722zM489.32 722v-4.67h2.2V722zM513.28 722v-43.61h2.2V722zM522.86 722v-4.67h2.2V722zM532.44 722v-4.67h2.2V722zM546.82 722v-15.82h2.2V722zM551.61 722v-71.4h2.2V722zM556.4 722v-38.13h2.2V722zM565.98 722v-4.67h2.2V722zM570.78 722v-10.14h2.2V722zM589.94 722v-4.67h2.2V722zM594.73 722v-4.67h2.2V722zM604.32 722v-26.98h2.2V722zM613.9 722v-15.82h2.2V722zM618.69 722v-15.82h2.2V722zM628.27 722v-26.98h2.2V722zM633.07 722v-21.3h2.2V722zM642.65 722v-4.67h2.2V722zM652.23 722v-26.98h2.2V722zM657.02 722v-4.67h2.2V722zM661.82 722v-10.14h2.2V722zM666.61 722v-15.82h2.2V722zM680.98 722v-21.3h2.2V722zM685.77 722v-10.14h2.2V722zM690.57 722v-10.14h2.2V722zM695.36 722v-10.14h2.2V722zM700.15 722v-38.13h2.2V722zM709.73 722v-15.82h2.2V722zM724.11 722v-32.45h2.2V722zM728.9 722v-10.14h2.2V722zM743.27 722v-15.82h2.2V722zM748.06 722v-54.77h2.2V722zM752.86 722v-4.67h2.2V722zM757.65 722v-21.3h2.2V722zM772.02 722v-4.67h2.2V722zM776.81 722v-4.67h2.2V722zM786.4 722v-32.45h2.2V722zM795.98 722v-21.3h2.2V722zM800.77 722v-4.67h2.2V722zM805.56 722v-4.67h2.2V722zM810.36 722v-15.82h2.2V722zM819.94 722v-15.82h2.2V722zM824.73 722v-21.3h2.2V722zM829.52 722v-26.98h2.2V722zM834.31 722v-10.14h2.2V722zM839.11 722v-10.14h2.2V722zM843.9 722v-4.67h2.2V722zM848.69 722v-4.67h2.2V722zM853.48 722v-21.3h2.2V722zM858.27 722v-15.82h2.2V722zM867.85 722v-10.14h2.2V722zM872.65 722v-10.14h2.2V722zM877.44 722v-4.67h2.2V722zM882.23 722v-43.61h2.2V722zM887.02 722v-10.14h2.2V722zM891.81 722v-71.4h2.2V722zM896.6 722v-10.14h2.2V722zM901.4 722v-4.67h2.2V722zM920.56 722v-32.45h2.2V722zM949.31 722v-10.14h2.2V722zM1011.6 722v-32.45h2.2V722zM1021.19 722v-4.67h2.2V722zM1064.31 722v-32.45h2.2V722zM1078.69 722v-26.98h2.2V722zM1083.48 722v-4.67h2.2V722zM1102.64 722v-49.09h2.2V722zM1126.6 722v-26.98h2.2V722zM1131.39 722v-32.45h2.2V722zM1136.18 722v-4.67h2.2V722zM1155.35 722v-15.82h2.2V722zM1160.14 722v-26.98h2.2V722zM1179.31 722v-15.82h2.2V722zM1184.1 722v-10.14h2.2V722zM1188.89 722v-4.67h2.2V722zM1212.85 722v-4.67h2.2V722z" fill="#f53636"/>
<path d="M182.66 722v17.24h2.2V722zM292.86 722v50.71h2.2V722zM297.65 722v6.09h2.2V722zM345.57 722v28.4h2.2V722zM403.07 722v17.24h2.2V722zM407.86 722v34.08h2.2V722zM455.78 722v16.23h2.2V722zM479.74 722v45.03h2.2V722zM494.11 722v34.08h2.2V722zM498.9 722v16.23h2.2V722zM508.48 722v6.09h2.2V722zM518.07 722v17.24h2.2V722zM527.65 722v11.76h2.2V722zM575.57 722v11.76h2.2V722zM580.36 722v11.76h2.2V722zM609.11 722v11.76h2.2V722zM637.86 722v6.09h2.2V722zM671.4 722v6.09h2.2V722zM676.19 722v17.24h2.2V722zM704.94 722v6.09h2.2V722zM714.52 722v6.09h2.2V722zM719.32 722v6.09h2.2V722zM733.69 722v6.09h2.2V722zM738.48 722v6.09h2.2V722zM791.19 722v11.76h2.2V722zM863.06 722v6.09h2.2V722zM910.98 722v17.24h2.2V722zM915.77 722v45.03h2.2V722zM925.35 722v11.76h2.2V722zM930.15 722v6.09h2.2V722zM934.94 722v39.55h2.2V722zM939.73 722v6.09h2.2V722zM954.1 722v11.76h2.2V722zM958.9 722v6.09h2.2V722zM968.48 722v11.76h2.2V722zM973.27 722v6.09h2.2V722zM978.06 722v34.08h2.2V722zM982.85 722v11.76h2.2V722zM992.44 722v6.09h2.2V722zM997.23 722v11.76h2.2V722zM1006.81 722v6.09h2.2V722zM1016.39 722v17.24h2.2V722zM1025.98 722v50.71h2.2V722zM1049.94 722v11.76h2.2V722zM1069.1 722v17.24h2.2V722zM1093.06 722v6.09h2.2V722zM1121.81 722v11.76h2.2V722zM1140.98 722v39.55h2.2V722zM1145.77 722v22.72h2.2V722zM1164.93 722v6.09h2.2V722zM1169.73 722v22.72h2.2V722zM1174.52 722v17.24h2.2V722zM1198.48 722v34.08h2.2V722z" fill="#00e800"/>
<path d="M12 716.5H1249" stroke="#b4b4b4" stroke-width="1" stroke-dasharray="3.3 1.7" fill="none"/>
<path d="M1214.5 107V779" stroke="#b0b0b0" stroke-width="1.1" stroke-dasharray="3.5 1.6" fill="none"/>
<path d="M1215 443.5l5.8 6h-11.6z" fill="#7a7a7a"/>
<path d="M1244.3 144.5L1250 139.3V149.7z" fill="#666"/>
<path d="M1222 143.5H1240" stroke="#555" stroke-width="1" stroke-dasharray="3 1.4" fill="none"/>
<path d="M1244.3 439.5L1250 434.3V444.7z" fill="#666"/>
<path d="M1222 438.5H1240" stroke="#555" stroke-width="1" stroke-dasharray="3 1.4" fill="none"/>
<path d="M15.68 475.94L20.14 478.77L25.21 479.38L30.28 478.37L35.35 479.38L40.43 481.01L46.51 481.01L50.57 484.45L54.62 488.11L58.68 488.92L63.14 486.89L68.82 494.19L73.29 497.03L77.95 499.67L83.02 502.71L88.09 505.14L92.15 505.14L97.22 503.72L102.29 506.36L106.96 508.8L111.42 509.81L115.88 509.2L121.16 507.78L126.02 507.17L130.69 506.36L135.76 502.71L140.83 499.06L145.29 499.67L149.96 500.28L155.03 501.29L159.7 501.29L164.16 500.07L168.82 500.68L174.3 502.71L178.97 502.71L183.43 502.3L188.09 501.7L193.57 503.72L198.03 509.4L202.7 511.23L206.75 510.42L212.43 505.14L216.9 502.3L221.56 497.64L226.23 495.61L231.7 498.25L236.17 499.06L240.83 500.68L246.31 501.29L250.97 505.14L255.44 508.8L260.1 514.88L265.17 518.94L270.07 519.95L274.74 522.99L279.2 526.04L284.68 529.08L289.34 532.53L293.8 533.74L298.06 532.12L303.54 532.12L308 533.74L312.67 533.14L317.33 536.18L322.81 538.21L327.27 535.57L331.94 534.15L336.4 537.6L342.08 535.57L346.54 532.12L351.21 533.74L356.28 533.14L360.94 530.09L365.81 529.08L370.07 525.43L375.55 523.4L380.21 522.99L384.68 522.99L389.14 521.98L394.82 518.94L399.28 520.36L403.95 519.95L408.41 518.94L414.09 524.01L418.55 524.01L423.22 524.62L427.27 524.41L432.95 522.59L437.41 523.4L442.08 525.43L446.95 528.06L452.02 530.09L456.68 532.53L461.15 533.54L466.83 537.19L471.49 535.77L475.95 533.74L480.42 534.56L485.69 533.74L490.56 534.56L494.82 531.11L499.69 528.06L504.96 524.41L509.83 524.62L514.09 524.62L518.55 527.46L524.06 527.66L528.52 529.08L533.18 531.51L537.65 533.54L543.33 535.57L547.79 537.6L552.45 539.63L557.12 540.84L562.19 538.21L567.06 539.22L571.32 540.24L577.2 536.79L581.46 536.18L586.13 530.7L590.59 528.67L596.06 527.46L600.53 524.62L605.19 524.01L609.86 522.99L615.33 528.06L619.8 529.48L624.46 534.15L628.92 538.21L634.2 542.26L639.07 543.28L643.33 552L647.79 553.01L653.47 557.88L658.13 560.52L662.6 561.53L667.06 562.55L672.54 563.56L677.2 562.55L681.66 568.23L687.34 569.65L691.81 571.68L696.47 573.1L700.93 574.11L706.21 574.11L710.87 570.66L715.33 567.21L720 564.58L725.48 565.59L730.14 569.04L734.6 566.6L739.07 566.6L744.54 569.24L749.21 569.04L753.67 568.23L758.34 569.24L763.81 568.63L768.48 568.23L772.94 566.2L777.43 568.63L782.71 568.23L787.58 570.05L791.84 571.07L797.31 569.04L801.98 570.66L806.44 568.23L811.11 567.62L816.58 566.2L821.25 559.91L825.71 560.52L830.17 563.56L835.85 572.08L840.31 572.69L844.98 576.14L849.44 577.35L854.72 577.35L859.58 574.72L863.84 577.15L868.31 577.76L873.99 580.19L878.45 578.77L883.11 581.21L887.78 582.22L893.05 582.83L897.72 583.44L902.18 585.87L907.86 587.5L912.32 583.85L916.99 580.8L921.45 584.25L926.72 587.5L931.19 589.53L935.85 585.47L940.31 585.47L945.99 578.17L950.66 577.35L955.12 574.72L959.58 576.14L965.06 572.08L969.73 570.66L974.19 569.65L978.45 566.6L984.33 563.97L989 563.97L993.46 563.56L997.72 562.55L1003.4 555.85L1007.86 554.03L1012.32 554.84L1018 553.01L1022.46 547.33L1027.41 544.9L1031.67 544.29L1037.14 543.89L1041.6 545.71L1046.27 543.89L1050.73 542.87L1056.41 540.24L1060.87 539.63L1065.54 540.24L1070 535.16L1075.28 534.15L1080.14 534.56L1084.4 535.16L1088.87 538.61L1094.55 539.22L1099.01 540.64L1103.47 544.29L1108.14 547.33L1113.82 546.73L1118.28 546.73L1122.74 547.33L1128.42 545.71L1132.88 544.29L1137.55 543.28L1142.01 541.25L1147.28 537.6L1152.15 537.19L1156.41 540.24L1160.87 541.25L1166.55 541.66L1171.02 541.66L1175.68 537.19L1180.14 532.53L1185.62 529.69L1190.29 529.08L1194.75 525.43L1199.21 522.99L1204.89 522.39L1209.35 524.62L1213.82 525.43" stroke="#ecb800" stroke-width="1.8" fill="none" stroke-linejoin="round"/><path d="M15.68 748.8L24.2 747.79L87.08 747.79L93.16 747.38L178.36 747.38L183.02 748.8L265.17 748.8L274.13 748.8L278.79 746.77L288.94 746.77L293.4 751.85L302.53 752.45L308 748.19L312.67 747.79L317.33 746.77L322.81 744.75L331.94 744.75L336.4 743.12L342.08 743.12L346.54 746.17L356.28 745.35L374.53 745.35L384.68 744.34L394.82 744.14L399.28 741.3L403.95 742.31L408.41 746.17L413.68 741.3L418.55 739.68L427.27 739.68L432.95 738.66L437.41 738.66L442.08 737.24L447.56 737.04L452.02 736.23L456.68 738.05L461.15 737.65L467.84 737.24L471.49 736.23L475.95 731.16L480.42 735.62L485.69 734L490.56 733.59L494.82 736.23L499.69 738.05L509.83 738.05L514.09 734L518.55 735.62L524.06 735.01L528.52 736.23L542.31 735.62L547.79 733.18L552.45 726.49L556.92 723.04L567.06 722.03L571.32 721.01L577.2 722.43L581.46 723.45L590.59 722.84L601.14 721.83L605.19 719.39L609.86 720.41L615.33 718.78L619.8 717.36L624.46 716.96L628.92 714.32L634.2 712.29L643.33 712.29L647.79 711.89L653.47 709.25L658.13 708.84L662.6 707.83L667.06 706.21L672.54 706.82L677.2 708.64L681.66 706.82L687.34 704.79L691.81 703.77L696.47 702.76L700.93 699.51L706.21 700.12L710.87 698.7L715.33 699.11L720 699.72L725.48 697.08L730.14 695.66L734.6 696.06L739.07 696.67L744.54 695.05L749.21 690.39L753.67 689.57L758.34 686.94L763.41 686.53L772.94 686.13L777.43 685.72L782.71 685.52L787.58 682.88L791.84 683.89L797.31 681.46L801.98 681.46L806.44 680.45L811.11 679.23L816.58 678.82L821.25 677.81L825.71 675.38L830.17 673.14L835.85 671.72L840.31 670.71L844.98 670.1L849.44 669.7L854.72 667.67L859.58 666.25L863.84 666.65L868.31 665.64L873.99 664.22L878.45 663.61L883.11 659.96L887.78 658.13L893.05 651.44L897.72 650.43L902.18 650.02L907.86 649.82L912.32 652.45L916.99 656.11L921.45 652.45L926.72 653.87L931.19 654.89L935.85 657.93L940.31 658.54L945.39 658.54L950.66 657.53L955.12 657.93L959.58 658.13L965.06 658.54L969.73 659.55L974.19 660.16L978.45 663L984.33 664.22L989 664.62L993.46 665.03L997.72 666.04L1003.4 666.65L1007.86 667.26L1012.32 663.61L1018 665.23L1022.46 664.62L1027.41 669.29L1046.27 669.29L1050.73 670.71L1060.47 671.12L1065.54 667.67L1070 669.29L1074.67 668.68L1080.14 666.65L1084.4 665.64L1094.55 667.06L1099.01 666.65L1103.47 662.6L1108.14 661.58L1113.82 661.58L1118.28 662.19L1122.74 663.2L1128.42 660.16L1132.88 656.92L1137.55 656.51L1142.01 660.16L1147.28 663L1152.15 663L1156.41 661.58L1160.87 658.13L1166.55 658.13L1171.02 660.16L1175.68 662.19L1180.14 660.97L1185.62 659.55L1190.29 658.95L1194.75 658.95L1199.21 662.6L1204.89 662.19L1209.35 662.19L1213.82 661.58" stroke="#ecb800" stroke-width="1.8" fill="none" stroke-linejoin="round"/>
<text x="1251.7" y="116" font-size="11" font-weight="bold" fill="#b4b4b4">11500</text>
<text x="1251.7" y="151" font-size="11" font-weight="bold" fill="#b4b4b4">11250</text>
<text x="1251.7" y="189.25" font-size="11" font-weight="bold" fill="#b4b4b4">11000</text>
<text x="1251.7" y="265.75" font-size="11" font-weight="bold" fill="#b4b4b4">10500</text>
<text x="1251.7" y="304" font-size="11" font-weight="bold" fill="#b4b4b4">10250</text>
<text x="1251.7" y="342.25" font-size="11" font-weight="bold" fill="#b4b4b4">10000</text>
<text x="1251.7" y="380.5" font-size="11" font-weight="bold" fill="#b4b4b4">9750</text>
<text x="1251.7" y="418.75" font-size="11" font-weight="bold" fill="#b4b4b4">9500</text>
<text x="1251.7" y="451" font-size="11" font-weight="bold" fill="#b4b4b4">9250</text>
<text x="1251.3" y="503" font-size="11" font-weight="bold" fill="#f0bc00" stroke="#f0bc00" stroke-width="0.45">9000</text>
<text x="1251.3" y="586" font-size="11" font-weight="bold" fill="#f0bc00" stroke="#f0bc00" stroke-width="0.45">7000</text>
<text x="1251.3" y="623" font-size="11" font-weight="bold" fill="#f0bc00" stroke="#f0bc00" stroke-width="0.45">6000</text>
<text x="1251.3" y="679" font-size="11" font-weight="bold" fill="#f0bc00" stroke="#f0bc00" stroke-width="0.45">20</text>
<text x="1251.3" y="783" font-size="11" font-weight="bold" fill="#f0bc00" stroke="#f0bc00" stroke-width="0.45">18</text>
<text x="9" y="796" font-size="11" font-weight="bold" fill="#b4b4b4">2018/04/02</text>
<text x="100" y="796" font-size="11" font-weight="bold" fill="#b4b4b4">05</text>
<text x="206" y="796" font-size="11" font-weight="bold" fill="#b4b4b4">06</text>
<text x="302" y="796" font-size="11" font-weight="bold" fill="#b4b4b4">07</text>
<text x="407" y="796" font-size="11" font-weight="bold" fill="#b4b4b4">08</text>
<text x="517" y="796" font-size="11" font-weight="bold" fill="#b4b4b4">09</text>
<text x="608" y="796" font-size="11" font-weight="bold" fill="#b4b4b4">10</text>
<text x="714" y="796" font-size="11" font-weight="bold" fill="#b4b4b4">11</text>
<text x="819" y="796" font-size="11" font-weight="bold" fill="#b4b4b4">12</text>
<text x="920" y="796" font-size="11" font-weight="bold" fill="#b4b4b4">2019/01</text>
<text x="1020" y="796" font-size="11" font-weight="bold" fill="#b4b4b4">02</text>
<text x="1083" y="796" font-size="11" font-weight="bold" fill="#b4b4b4">03</text>
<rect x="1227.7" y="213.6" width="64" height="16.8" rx="3" fill="#efebeb" stroke="#f79c9c" stroke-width="1.3"/>
<text x="1286.9" y="227.34" font-size="14.7" fill="#dd4040" text-anchor="end">10,805.3</text>
<rect x="1243.6" y="536.6" width="48" height="16.8" rx="3" fill="#efebeb" stroke="#f79c9c" stroke-width="1.3"/>
<text x="1286.9" y="550.34" font-size="14.7" fill="#dd4040" text-anchor="end">-15.25</text>
<rect x="1252.7" y="716.6" width="31.7" height="16.8" rx="3" fill="#efebeb" stroke="#f79c9c" stroke-width="1.3"/>
<text x="1268.4" y="730.34" font-size="14.7" fill="#dd4040" text-anchor="middle">0.01</text>
<rect x="1177.9" y="780.7" width="75.7" height="16.5" rx="3" fill="#efebeb" stroke="#f79c9c" stroke-width="1.3"/>
<text x="1215.6" y="794.29" font-size="14.7" fill="#dd4040" text-anchor="middle">2019/04/12</text>
<rect x="1145.5" y="114.5" width="17" height="17" rx="3.2" fill="#cfe5ff" stroke="#7fb8ff" stroke-width="1"/>
<rect x="1151" y="116.5" width="6" height="13" fill="#9ccaff"/>
<path d="M1150 116.5v13M1157.7 116.5v13" stroke="#2b86ef" stroke-width="1.8" fill="none"/>
<path d="M1150 122.5h5" stroke="#2b86ef" stroke-width="1.2" fill="none"/><path d="M1156 122.5l-2.6 -2v4z" fill="#2b86ef"/>
<rect x="1170.5" y="114.5" width="17" height="17" rx="3.2" fill="#c9c9c9" stroke="#c9c9c9" stroke-width="1"/>
<circle cx="1179" cy="123.5" r="5.3" fill="none" stroke="#e9e9e9" stroke-width="1.8"/>
<path d="M1171.5 123.5h5M1181.5 123.5h5M1179 116v5M1179 126v5" stroke="#ededed" stroke-width="1.2" fill="none"/>
<rect x="1195.5" y="114.5" width="17" height="17" rx="3.2" fill="#cfe5ff" stroke="#7fb8ff" stroke-width="1"/>
<rect x="1198.2" y="117.2" width="11.6" height="11.6" fill="none" stroke="#2b86ef" stroke-width="1.8"/>
<path d="M1201.5 123.5h6M1204.5 120.5v6" stroke="#2b86ef" stroke-width="1.3" fill="none"/>
<rect x="1219.5" y="114.5" width="17" height="17" rx="3.2" fill="#cfe5ff" stroke="#7fb8ff" stroke-width="1"/>
<path d="M1223 119h10M1222.5 123.3h10M1222.5 127.6h10" stroke="#4b9af3" stroke-width="1.3" fill="none"/>
<path d="M1222.3 119l2.8 -2v4zM1233.6 123.3l-2.8 -2v4z" fill="#2b86ef"/>
<path d="M1227.3 125.9v3.4" stroke="#2b86ef" stroke-width="1.6" fill="none"/>
</svg>
<svg width="1287" height="799" viewBox="0 0 1287 799">
<rect x="15.5" y="456.5" width="93" height="22.7" rx="1" fill="#c6c6c6" fill-opacity="0.88" stroke="#d4d4d4" stroke-opacity="0.9" stroke-width="1"/>
<text x="23" y="472.35" font-size="12.3" fill="#4a4a4a">10億以上券商<tspan font-size="13.5" fill="#111" dx="-1.5" dy="0.5">▼</tspan></text>
<rect x="126.8" y="457.4" width="12" height="12" rx="3" fill="#161616" stroke="#6c6c6c" stroke-width="1.4"/>
<path d="M128.8 463.6l2.8 3.2l5.6 -7" stroke="#b0b0b0" stroke-width="1.3" fill="none"/>
<text x="142.6" y="468.6" font-size="12" font-weight="normal" fill="#00dc00"><tspan font-weight="500">買賣超</tspan> -15.25 <tspan font-weight="500">億元</tspan></text>
<rect x="255.6" y="457.4" width="12" height="12" rx="3" fill="#161616" stroke="#6c6c6c" stroke-width="1.4"/>
<path d="M257.6 463.6l2.8 3.2l5.6 -7" stroke="#b0b0b0" stroke-width="1.3" fill="none"/>
<text x="271.5" y="468.6" font-size="12" font-weight="bold" fill="#e8b400">累計買賣超 8,325.47 億元</text>
<rect x="15.5" y="630.5" width="99" height="21.3" rx="1" fill="#c6c6c6" fill-opacity="0.88" stroke="#d4d4d4" stroke-opacity="0.9" stroke-width="1"/>
<text x="23" y="645.65" font-size="12.3" fill="#4a4a4a">1千萬以下券商<tspan font-size="13.5" fill="#111" dx="-1.5" dy="0.5">▼</tspan></text>
<rect x="132.8" y="631" width="12" height="12" rx="3" fill="#161616" stroke="#6c6c6c" stroke-width="1.4"/>
<path d="M134.8 637.2l2.8 3.2l5.6 -7" stroke="#b0b0b0" stroke-width="1.3" fill="none"/>
<text x="148.3" y="643.4" font-size="12" font-weight="normal" fill="#e83030"><tspan font-weight="500">買賣超</tspan> 0.01 <tspan font-weight="500">億元</tspan></text>
<rect x="250.8" y="631" width="12" height="12" rx="3" fill="#161616" stroke="#6c6c6c" stroke-width="1.4"/>
<path d="M252.8 637.2l2.8 3.2l5.6 -7" stroke="#b0b0b0" stroke-width="1.3" fill="none"/>
<text x="266.6" y="643.4" font-size="12" font-weight="bold" fill="#e8b400">累計買賣超 20.21 億元</text>
</svg>
<div class="title"><div class="t">籌碼分析</div>
<svg width="130" height="37" viewBox="0 0 130 37"><circle cx="108.6" cy="15" r="10" fill="none" stroke="#9f9f9f" stroke-width="1.2"/><text x="108.7" y="22.4" font-size="21" fill="#9f9f9f" text-anchor="middle">?</text></svg>
</div>
<div class="tabs">
<div class="tab on">主力</div>
<div class="tab" style="left:61px">法人</div>
<div class="tab" style="left:113px">資券</div>
<div class="tab" style="left:164px">自選1</div>
<div class="tab" style="left:225px">自選2</div>
<div class="tab" style="left:286px">自選3</div>
<svg width="1287" height="36" viewBox="0 37 1287 36" style="top:0"><circle cx="1236.5" cy="52.6" r="8" fill="none" stroke="#f4f4f4" stroke-width="1.7"/><text x="1236.5" y="56.5" font-size="14" fill="#f4f4f4" text-anchor="middle">x</text><path d="M1265.28 42.96L1268.72 42.96L1268.82 45.14L1270.57 45.86L1272.17 44.39L1274.61 46.83L1273.14 48.43L1273.86 50.18L1276.04 50.28L1276.04 53.72L1273.86 53.82L1273.14 55.57L1274.61 57.17L1272.17 59.61L1270.57 58.14L1268.82 58.86L1268.72 61.04L1265.28 61.04L1265.18 58.86L1263.43 58.14L1261.83 59.61L1259.39 57.17L1260.86 55.57L1260.14 53.82L1257.96 53.72L1257.96 50.28L1260.14 50.18L1260.86 48.43L1259.39 46.83L1261.83 44.39L1263.43 45.86L1265.18 45.14zM1263.6 52a3.4 3.4 0 1 0 6.8 0a3.4 3.4 0 1 0 -6.8 0z" fill="#dcdcdc" fill-rule="evenodd"/></svg>
</div>
<div class="info">
<span class="nm" style="left:6px">加權指數</span>
<svg width="14" height="32" viewBox="0 0 14 32" style="left:74px"><path d="M6.8 7V19.5M2.4 15.2L6.8 19.9L11.2 15.2" stroke="#12a212" stroke-width="2" fill="none"/></svg>
<span class="g" style="left:90.5px">10805.3</span>
<span style="left:139px">元</span>
<span style="left:156px">04/12</span>
<span class="g" style="left:192px"><span class="tri">▼</span>-3.47 (-0.03%)</span>
<span style="left:300px">高:<span class="r" style="position:static">10836.44</span></span>
<span style="left:378.5px">低:<span class="g" style="position:static">10782.02</span></span>
<span style="left:456.5px">開:<span class="r" style="position:static">10820.94</span></span>
<span style="left:536.5px">量:1,210.2張</span>
</div>
<div class="lb"></div>
</body>
</html>
